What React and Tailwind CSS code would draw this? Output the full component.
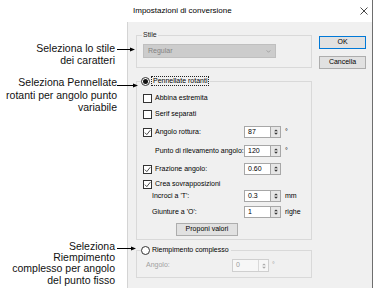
import React from "react";

const Check = ({ checked }) => (
  <span className="w-[9px] h-[9px] shrink-0 border border-[#333] bg-white flex items-center justify-center">
    {checked && (
      <svg viewBox="0 0 8 8" className="w-[7px] h-[7px]">
        <path d="M1 4.2 L3.2 6.4 L7.2 1.4" stroke="#1a1a1a" strokeWidth="0.9" fill="none" />
      </svg>
    )}
  </span>
);

const Radio = ({ checked }) => (
  <span className="w-[9px] h-[9px] shrink-0 rounded-full border border-[#333] bg-white flex items-center justify-center">
    {checked && <span className="w-[5px] h-[5px] rounded-full bg-[#111]" />}
  </span>
);

const Arrows = ({ color = "#333" }) => (
  <svg viewBox="0 0 8 10" className="w-[6px] h-[8px]">
    <path d="M4 1.5 L6.5 4 L1.5 4 Z" fill={color} />
    <path d="M4 8.5 L6.5 6 L1.5 6 Z" fill={color} />
  </svg>
);

const Spin = ({ value }) => (
  <div className="flex h-[12px]">
    <div className="w-[27px] h-full border border-[#a7a7a7] bg-white pl-[3px] flex items-center text-[7px]">
      {value}
    </div>
    <div className="w-[10px] h-full border border-l-0 border-[#a7a7a7] bg-[#e6e6e6] flex items-center justify-center">
      <Arrows />
    </div>
  </div>
);

const Row = ({ children, className = "" }) => (
  <div className={`flex items-center ${className}`}>{children}</div>
);

const Leader = ({ top, width }) => (
  <div className="absolute left-[117px] h-[5px] flex items-center" style={{ top: top - 2, width }}>
    <div className="flex-1 h-px bg-black" />
    <svg viewBox="0 0 5 5" className="w-[5px] h-[5px] -ml-px">
      <path d="M0 0.5 L5 2.5 L0 4.5 Z" fill="#000" />
    </svg>
  </div>
);

export default function App() {
  return (
    <div className="relative w-[383px] h-[303px] bg-white flex overflow-hidden text-black font-['Liberation_Sans',Arial,sans-serif]">
      {/* annotations */}
      <div className="w-[127px] shrink-0 flex flex-col text-right pr-[12px] text-[10.5px] text-[#111]">
        <div className="mt-[42px] leading-[12px]">
          Seleziona lo stile
          <br />
          dei caratteri
        </div>
        <div className="mt-[10px] leading-[12.5px] -mr-[2px]">
          Seleziona Pennellate
          <br />
          rotanti per angolo punto
          <br />
          variabile
        </div>
        <div className="mt-[127px] leading-[11.4px]">
          Seleziona
          <br />
          Riempimento
          <br />
          complesso per angolo
          <br />
          del punto fisso
        </div>
      </div>

      {/* dialog */}
      <div className="w-[246px] h-[288px] shrink-0 flex flex-col border-r border-[#6e6e6e]">
        <div className="h-[22px] bg-white flex items-center justify-between pl-[6px] pr-[4px] text-[8px]">
          <span>Impostazioni di conversione</span>
          <svg viewBox="0 0 8 8" className="w-[8px] h-[8px]">
            <path d="M0.5 0.5 L7.5 7.5 M7.5 0.5 L0.5 7.5" stroke="#333" strokeWidth="0.9" />
          </svg>
        </div>
        <div className="flex-1 bg-[#f0f0f0] border-l border-[#d4d4d4] flex pl-[8px] pr-[6px] text-[7px]">
          <div className="w-[176px] flex flex-col">
            {/* Stile */}
            <fieldset className="mt-[8px] border border-[#d9d9d9] pl-[6px] pt-[4px] pb-[9px]">
              <legend className="h-[10px] leading-[10px] px-[1px] -ml-[1px] text-[#222]">Stile</legend>
              <div className="w-[133px] h-[14px] bg-[#cccccc] border border-[#bfbfbf] flex items-center justify-between pl-[4px] pr-[4px] text-[#838383]">
                <span>Regular</span>
                <svg viewBox="0 0 6 4" className="w-[5px] h-[3px]">
                  <path d="M0.5 0.5 L3 3 L5.5 0.5" stroke="#8a8a8a" strokeWidth="0.8" fill="none" />
                </svg>
              </div>
            </fieldset>

            {/* Pennellate rotanti */}
            <fieldset className="mt-[8px] border border-[#d9d9d9] pl-[6px] pt-[7px] pb-[3px]">
              <legend className="h-[10px] -ml-[2px] flex items-center gap-[1px] pr-[1px]">
                <Radio checked />
                <span className="border border-dotted border-[#222] px-[1px] leading-[8px]">Pennellate rotanti</span>
              </legend>
              <Row className="h-[10px] gap-[3px]">
                <Check />
                <span>Abbina estremita</span>
              </Row>
              <Row className="h-[10px] gap-[3px] mt-[6px]">
                <Check />
                <span>Serif separati</span>
              </Row>
              <Row className="h-[12px] mt-[7px]">
                <div className="w-[101px] flex items-center gap-[3px]">
                  <Check checked />
                  <span>Angolo rottura:</span>
                </div>
                <Spin value="87" />
                <span className="ml-[4px]">°</span>
              </Row>
              <Row className="h-[12px] mt-[7px]">
                <div className="w-[101px] pl-[12px] whitespace-nowrap">Punto di rilevamento angolo:</div>
                <Spin value="120" />
                <span className="ml-[4px]">°</span>
              </Row>
              <Row className="h-[12px] mt-[6px]">
                <div className="w-[101px] flex items-center gap-[3px]">
                  <Check checked />
                  <span>Frazione angolo:</span>
                </div>
                <Spin value="0.60" />
              </Row>
              <Row className="h-[10px] gap-[3px] mt-[4px]">
                <Check checked />
                <span>Crea sovrapposizioni</span>
              </Row>
              <Row className="h-[12px] mt-[1px]">
                <div className="w-[101px] pl-[9px]">Incroci a 'T':</div>
                <Spin value="0.3" />
                <span className="ml-[4px]">mm</span>
              </Row>
              <Row className="h-[12px] mt-[4px]">
                <div className="w-[101px] pl-[9px]">Giunture a 'O':</div>
                <Spin value="1" />
                <span className="ml-[4px]">righe</span>
              </Row>
              <button className="mt-[5px] ml-[33px] w-[62px] h-[13px] bg-[#e1e1e1] border border-[#adadad] flex items-center justify-center">
                Proponi valori
              </button>
            </fieldset>

            {/* Riempimento complesso */}
            <fieldset className="mt-[5px] border border-[#d9d9d9] pl-[9px] pt-[4px] pb-[5px]">
              <legend className="h-[10px] -ml-[5px] flex items-center gap-[2px] pr-[2px]">
                <Radio />
                <span>Riempimento complesso</span>
              </legend>
              <Row className="h-[13px]">
                <div className="w-[86px] text-[#a0a0a0]">Angolo:</div>
                <div className="w-[37px] h-full border border-[#cfcfcf] bg-[#f7f7f7] flex items-center justify-between pl-[3px] text-[#9a9a9a]">
                  <span>0</span>
                  <div className="w-[10px] h-full border-l border-[#d9d9d9] flex items-center justify-center">
                    <Arrows color="#a8a8a8" />
                  </div>
                </div>
                <span className="ml-[3px] text-[#a0a0a0]">°</span>
              </Row>
            </fieldset>
          </div>

          {/* buttons */}
          <div className="w-[47px] ml-[7px] flex flex-col gap-[7px] pt-[14px]">
            <button className="h-[13px] bg-[#e1e1e1] border border-[#0078d7] flex items-center justify-center">OK</button>
            <button className="h-[13px] bg-[#e1e1e1] border border-[#adadad] flex items-center justify-center">Cancella</button>
          </div>
        </div>
      </div>

      <Leader top={49} width={18} />
      <Leader top={85} width={21} />
      <Leader top={248} width={19} />
    </div>
  );
}
